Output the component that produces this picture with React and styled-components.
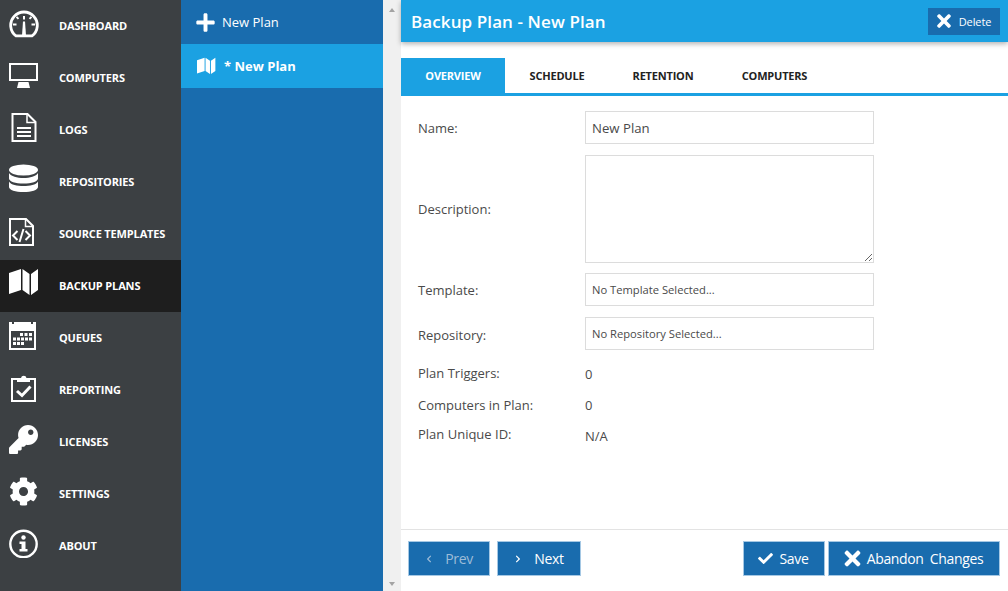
import React from 'react';
import styled, { createGlobalStyle } from 'styled-components';
import { FaKey, FaCog, FaTimes, FaCheck, FaPlus, FaChevronLeft, FaChevronRight } from 'react-icons/fa';

const GlobalStyle = createGlobalStyle`
    html, body { margin: 0; padding: 0; height: 100%; overflow: hidden; }
    body { font-family: "Open Sans", "Noto Sans", sans-serif; background: #fff; }
    #root { height: 100%; }
`

const Page = styled.div`
    display: flex;
    width: 1008px;
    height: 591px;
    overflow: hidden;
`
const Sidebar = styled.nav`
    width: 181px;
    flex: none;
    background: #3c4043;
`
const NavItem = styled.div`
    display: flex;
    align-items: center;
    height: 52px;
    background: ${p => (p.$active ? '#1e1e1e' : 'transparent')};
`
const NavIcon = styled.span`
    width: 59px;
    height: 52px;
    flex: none;
    display: flex;
    align-items: center;
    color: #fff;
    padding: 0 0 6px 9px;
    box-sizing: border-box;
`
const NavLabel = styled.span`
    color: #fff;
    font-size: 11px;
    font-weight: 700;
    letter-spacing: -0.15px;
    padding-bottom: 2px;
`
const PlanList = styled.div`
    width: 202px;
    flex: none;
    background: #196cae;
`
const PlanItem = styled.div`
    display: flex;
    align-items: center;
    height: 44px;
    padding-left: 14px;
    color: #fff;
    font-size: 13px;
    font-weight: ${p => (p.$active ? 700 : 400)};
    background: ${p => (p.$active ? '#1ba1e2' : 'transparent')};
`
const PlanIcon = styled.span`
    width: ${p => p.$width}px;
    flex: none;
    display: flex;
    align-items: center;
    padding-left: ${p => p.$inset || 0}px;
    box-sizing: border-box;
`
const Scrollbar = styled.div`
    width: 18px;
    flex: none;
    background: #f0f0f0;
    display: flex;
    flex-direction: column;
    justify-content: space-between;
    align-items: center;
    padding: 8px 0 5px;
    box-sizing: border-box;
`
const Arrow = styled.span`
    width: 0;
    height: 0;
    border-left: 3px solid transparent;
    border-right: 3px solid transparent;
    border-${p => (p.$down ? 'top' : 'bottom')}: 4px solid #a3a3a3;
`
const Main = styled.main`
    flex: 1;
    display: flex;
    flex-direction: column;
    min-width: 0;
`
const Header = styled.header`
    height: 42px;
    flex: none;
    background: #1ba1e2;
    box-shadow: 0 2px 5px rgba(0, 0, 0, 0.3);
    display: flex;
    align-items: center;
    justify-content: space-between;
    padding: 0 8px 0 10px;
`
const Title = styled.h1`
    margin: 0;
    color: #fff;
    font-size: 17px;
    font-weight: 600;
    letter-spacing: 0.1px;
`
const DeleteButton = styled.button`
    width: 72px;
    height: 27px;
    border: 0;
    padding: 0 3px 0 0;
    background: #196cae;
    color: #fff;
    font: 400 11px "Open Sans", sans-serif;
    letter-spacing: -0.1px;
    display: flex;
    align-items: center;
    justify-content: center;
    gap: 5px;
`
const Tabs = styled.div`
    display: flex;
    gap: 1px;
    margin-top: 16px;
    height: 38px;
    flex: none;
    box-sizing: border-box;
    border-bottom: 3px solid #1ba1e2;
`
const Tab = styled.div`
    width: ${p => p.$width}px;
    display: flex;
    align-items: center;
    justify-content: center;
    font-size: 11px;
    font-weight: 700;
    letter-spacing: -0.2px;
    color: ${p => (p.$active ? '#fff' : '#222')};
    background: ${p => (p.$active ? '#1ba1e2' : 'transparent')};
`
const Form = styled.div`
    flex: 1;
    padding: 15px 0 0 17px;
    border-bottom: 1px solid #e3e3e3;
`
const Row = styled.div`
    display: flex;
    align-items: center;
    height: ${p => p.$height || 33}px;
    margin-bottom: ${p => (p.$gap === undefined ? 11 : p.$gap)}px;
`
const Label = styled.div`
    width: 167px;
    flex: none;
    font-size: 13px;
    color: #4a4a4a;
    padding-bottom: ${p => p.$lift || 0}px;
    padding-top: ${p => p.$drop || 0}px;
`
const Value = styled.div`
    font-size: 13px;
    color: #4a4a4a;
`
const Field = styled.div`
    width: 289px;
    height: 33px;
    box-sizing: border-box;
    border: 1px solid #dcdcdc;
    padding: 0 6px;
    display: flex;
    align-items: center;
    color: #4a4a4a;
    font-size: ${p => (p.$small ? 11.2 : 13.2)}px;
`
const TextArea = styled.textarea`
    width: 289px;
    height: 108px;
    box-sizing: border-box;
    border: 1px solid #dcdcdc;
    display: block;
    outline: none;
    margin: 0;
`
const Footer = styled.footer`
    height: 61px;
    flex: none;
    display: flex;
    justify-content: space-between;
    padding: 11px 8px 0 7px;
    box-sizing: border-box;
`
const ButtonGroup = styled.div`
    display: flex;
    gap: ${p => p.$gap}px;
`
const ActionButton = styled.button`
    width: ${p => p.$width}px;
    height: 35px;
    padding: 0 ${p => p.$trim || 0}px 0 0;
    border: 1px solid #a5c8e4;
    background: #196cae;
    color: ${p => (p.$disabled ? '#9dbcd8' : '#fff')};
    font: 400 14px "Open Sans", sans-serif;
    letter-spacing: -0.35px;
    word-spacing: 3px;
    display: flex;
    align-items: center;
    justify-content: center;
    gap: ${p => p.$iconGap || 7}px;
`

const Stroke = ({ children }) => (
    <svg width="30" height="30" viewBox="0 0 30 30" fill="none" stroke="currentColor" strokeWidth="2">{children}</svg>
);

const GaugeIcon = () => (
    <Stroke>
        <g transform="translate(0 1.4)">
            <path d="M7 26.500A13.300 13.300 0 1 1 23 26.500Z" strokeWidth="2.800" />
            <path d="M15 6.500V10M7.500 15H4M26 15h-3.500M9.500 9.500l-2-2M20.500 9.500l2-2" />
            <path d="M14 12h2l1 14h-4Z" fill="currentColor" stroke="none" />
        </g>
    </Stroke>
);
const MonitorIcon = () => (
    <Stroke>
        <rect x="1" y="4" width="27" height="16" />
        <path d="M8 28l1.500-6h10l1.500 6Z" fill="currentColor" stroke="none" />
    </Stroke>
);
const LogIcon = () => (
    <Stroke>
        <path d="M3.500 2h15l8 8v19h-23Z" />
        <path d="M18 2.500v8h8" strokeWidth="1.500" />
        <path d="M8 16h14M8 20h14M8 24h14" />
    </Stroke>
);
const DatabaseIcon = () => (
    <svg width="30" height="30" viewBox="0 0 30 30" fill="currentColor">
        <ellipse cx="14.500" cy="6" rx="14.500" ry="5.500" />
        <path d="M0 9c2 3.500 8 5 14.500 5S27 12.500 29 9v5.500c0 3-6.500 5-14.500 5S0 17.500 0 14.500Z" />
        <path d="M0 17.500c2 3.500 8 4.500 14.500 4.500S27 21 29 17.500V23c0 3-6.500 5-14.500 5S0 26 0 23Z" />
    </svg>
);
const CodeIcon = () => (
    <Stroke>
        <path d="M1 3h16l7 7v19H1Z" />
        <path d="M16.500 3.500v7h7" strokeWidth="1.500" />
        <path d="M8.500 15l-4.500 4.500 4.500 4.500M16.500 15l4.500 4.500-4.500 4.500M14.500 13l-4 13" />
    </Stroke>
);
const MapIcon = ({ size = 30 }) => (
    <svg width={size} height={size} viewBox="0 0 30 30" fill="currentColor">
        <path d="M0 5 12 1v21L0 26ZM13.500 1 20.500 6v21l-7-5ZM22 6l7-5v21l-7 5Z" />
    </svg>
);
const CalendarIcon = () => (
    <svg width="30" height="30" viewBox="0 0 30 30" fill="currentColor">
        <path fillRule="evenodd" d="M0 2h3v2h2V2h17v2h2V2h3v28H0ZM2 11v17h23V11Z" />
        <path d="M11 13h3v3h-3ZM15.500 13h3v3h-3ZM20 13h3v3h-3ZM4 17.500h3v3H4ZM8 17.500h3v3H8ZM12 17.500h3v3h-3ZM16 17.500h3v3h-3ZM20 17.500h3v3h-3ZM4 22h3v3H4ZM8 22h3v3H8ZM12 22h3v3h-3Z" />
    </svg>
);
const ClipboardIcon = () => (
    <svg width="30" height="30" viewBox="0 0 30 30">
        <path d="M3 7h23v22H3Z" fill="none" stroke="currentColor" strokeWidth="2" />
        <path d="M8 6h4a2.800 2.800 0 0 1 5.500 0H21v4H8Z" fill="currentColor" />
        <path d="M8 19l5 4.500 8.500-9" fill="none" stroke="currentColor" strokeWidth="3" />
    </svg>
);
const InfoIcon = () => (
    <svg width="30" height="30" viewBox="0 0 30 30" fill="currentColor">
        <circle cx="14.500" cy="16" r="13.200" fill="none" stroke="currentColor" strokeWidth="2.400" />
        <circle cx="14.500" cy="9.500" r="2.200" />
        <path d="M10.500 13.500h6V21h2v2.500h-8V21h2v-5h-2Z" />
    </svg>
);

const navItems = [
    ['DASHBOARD', <GaugeIcon />],
    ['COMPUTERS', <MonitorIcon />],
    ['LOGS', <LogIcon />],
    ['REPOSITORIES', <DatabaseIcon />],
    ['SOURCE TEMPLATES', <CodeIcon />],
    ['BACKUP PLANS', <MapIcon />],
    ['QUEUES', <CalendarIcon />],
    ['REPORTING', <ClipboardIcon />],
    ['LICENSES', <FaKey size={29} />],
    ['SETTINGS', <FaCog size={29} />],
    ['ABOUT', <InfoIcon />],
];

const App = () => (
    <Page>
        <GlobalStyle />
        <Sidebar>
            {navItems.map(([label, icon]) => (
                <NavItem key={label} $active={label === 'BACKUP PLANS'}>
                    <NavIcon>{icon}</NavIcon>
                    <NavLabel>{label}</NavLabel>
                </NavItem>
            ))}
        </Sidebar>
        <PlanList>
            <PlanItem><PlanIcon $width={27}><FaPlus size={21} /></PlanIcon>New Plan</PlanItem>
            <PlanItem $active><PlanIcon $width={29} $inset={2}><MapIcon size={19} /></PlanIcon>* New Plan</PlanItem>
        </PlanList>
        <Scrollbar><Arrow /><Arrow $down /></Scrollbar>
        <Main>
            <Header>
                <Title>Backup Plan - New Plan</Title>
                <DeleteButton><FaTimes size={20} />Delete</DeleteButton>
            </Header>
            <Tabs>
                <Tab $active $width={104}>OVERVIEW</Tab>
                <Tab $width={102}>SCHEDULE</Tab>
                <Tab $width={108}>RETENTION</Tab>
                <Tab $width={113}>COMPUTERS</Tab>
            </Tabs>
            <Form>
                <Row><Label>Name:</Label><Field>New Plan</Field></Row>
                <Row $height={108} $gap={10}><Label>Description:</Label><TextArea readOnly /></Row>
                <Row><Label>Template:</Label><Field $small>No Template Selected...</Field></Row>
                <Row $gap={8}><Label $drop={2}>Repository:</Label><Field $small>No Repository Selected...</Field></Row>
                <Row $height={31} $gap={0}><Label $lift={2}>Plan Triggers:</Label><Value>0</Value></Row>
                <Row $height={31} $gap={0}><Label>Computers in Plan:</Label><Value>0</Value></Row>
                <Row $height={31} $gap={0}><Label $lift={3}>Plan Unique ID:</Label><Value>N/A</Value></Row>
            </Form>
            <Footer>
                <ButtonGroup $gap={7}>
                    <ActionButton $width={82} $disabled $iconGap={12}><FaChevronLeft size={8} />Prev</ActionButton>
                    <ActionButton $width={84} $iconGap={12}><FaChevronRight size={8} />Next</ActionButton>
                </ButtonGroup>
                <ButtonGroup $gap={3}>
                    <ActionButton $width={82} $trim={2}><FaCheck size={15} />Save</ActionButton>
                    <ActionButton $width={172} $trim={4} $iconGap={3}><FaTimes size={23} />Abandon Changes</ActionButton>
                </ButtonGroup>
            </Footer>
        </Main>
    </Page>
);

export default App;
